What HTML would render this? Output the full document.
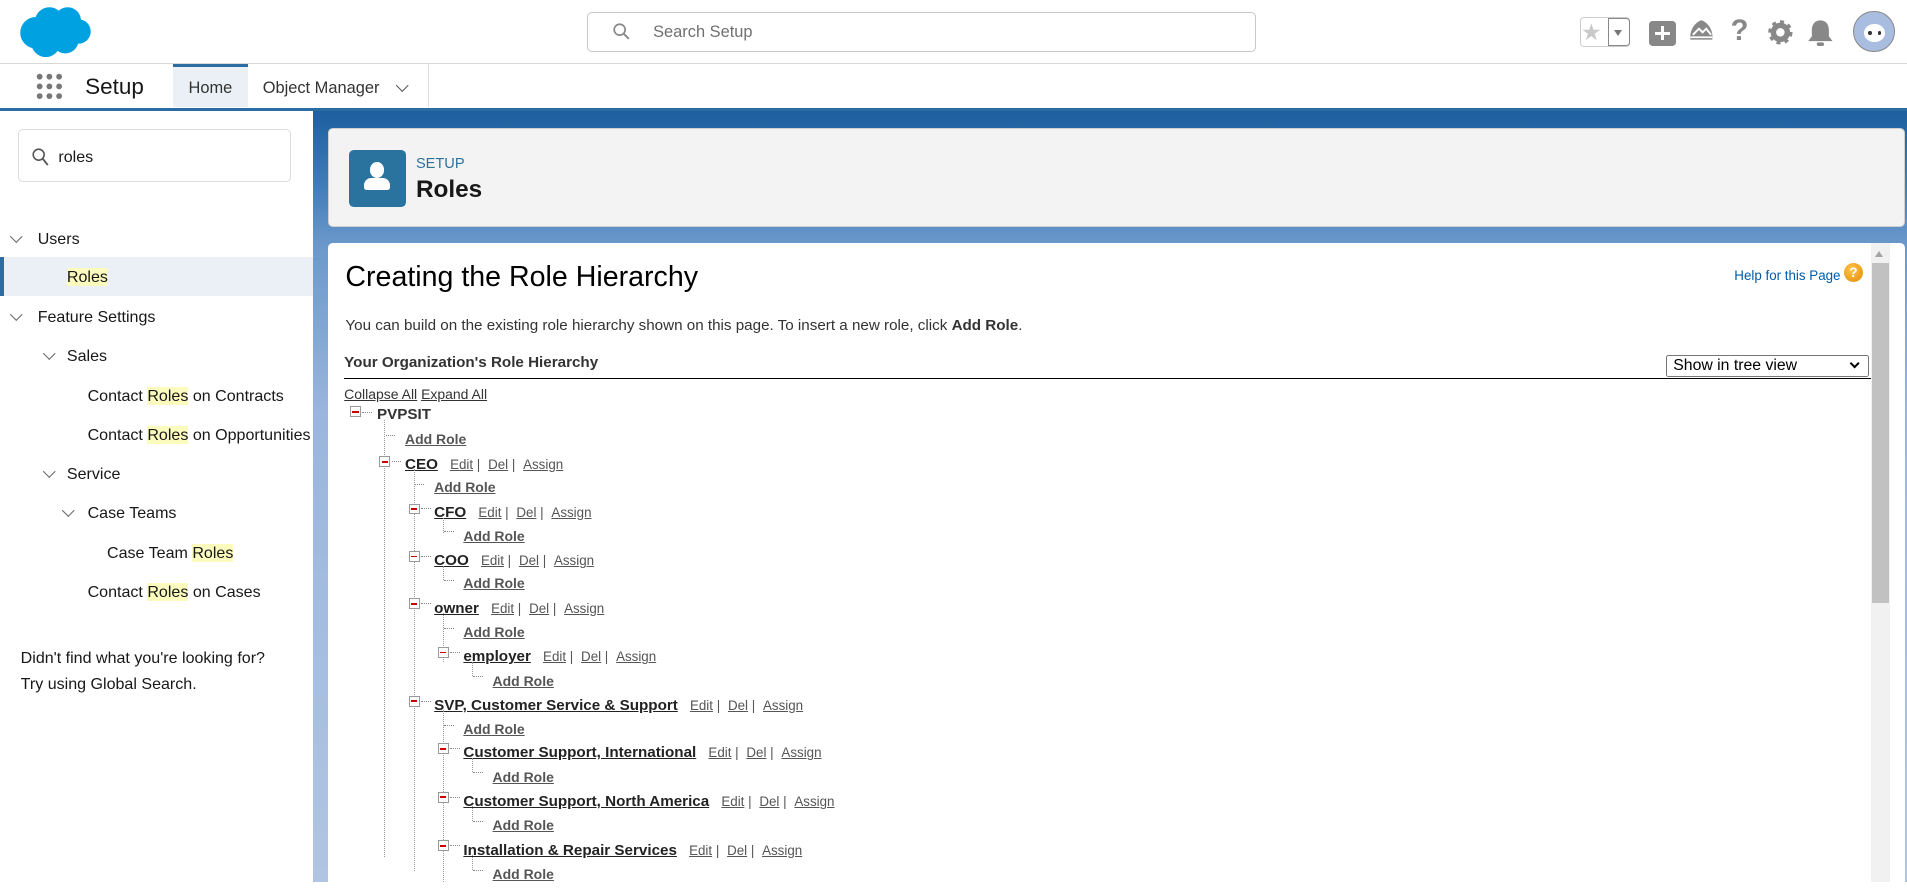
<!DOCTYPE html>
<html><head><meta charset="utf-8"><style>
html{zoom:1.21620}
*{box-sizing:border-box;margin:0;padding:0}
body{width:1568px;height:725px;overflow:hidden;font-family:"Liberation Sans",sans-serif;background:#fff;position:relative;color:#181818}
.a{position:absolute}
.hdr{left:0;top:0;width:1568px;height:53px;border-bottom:1px solid #d8d8d8;background:#fff}
.nav{left:0;top:53px;width:1568px;height:38px;background:#fff;border-bottom:3px solid #2b6ca3}
.side{left:0;top:91px;width:257px;height:634px;background:#fff}
.side .t{position:absolute;font-size:13.2px;color:#181818;white-space:nowrap}
.hl{background:#fbfbbd}
.chev{position:absolute;width:7px;height:7px;border-right:1.5px solid #666;border-bottom:1.5px solid #666;transform:rotate(45deg)}
.main{left:257px;top:91px;width:1311px;height:634px;background:linear-gradient(180deg,#1d5f9f 0px,#3f7cb8 60px,#6b98cb 110px,#9ab6dc 250px,#b0c5e3 634px)}
.card{background:#f3f3f3;border-radius:4px;border:1px solid #d0d0d0}
.tr{position:absolute;white-space:nowrap;font-size:12px}
.nm{font-weight:bold;color:#222;text-decoration:underline;font-size:12.5px}
.lk{color:#555;text-decoration:underline;font-size:11px}
.sep{color:#555;font-size:11px}
.ar{font-weight:bold;color:#555;text-decoration:underline;font-size:11.5px}
.box{position:absolute;width:9px;height:9px;border:1px solid #999;background:#fff}
.box:after{content:"";position:absolute;left:1px;top:3px;width:5px;height:1.5px;background:#c00}
.dh{position:absolute;width:8px;border-top:1px dotted #888}
.dv{position:absolute;border-left:1px dotted #999}
</style></head><body>
<div class="a hdr">
 <svg class="a" style="left:16px;top:5px" width="60" height="43" viewBox="0 0 60 43"><g fill="#00a1e0"><circle cx="14" cy="22" r="13"/><circle cx="25" cy="13" r="12"/><circle cx="40" cy="12" r="11"/><circle cx="49" cy="21" r="10"/><circle cx="38" cy="28" r="11"/><circle cx="22" cy="30" r="12"/></g></svg>
 <div class="a" style="left:483px;top:10px;width:550px;height:33px;border:1px solid #c9c9c9;border-radius:4px"></div>
 <svg class="a" style="left:504px;top:19px" width="14" height="14" viewBox="0 0 14 14"><circle cx="5.5" cy="5.5" r="4.5" fill="none" stroke="#888" stroke-width="1.4"/><path d="M9 9l4 4" stroke="#888" stroke-width="1.6"/></svg>
 <div class="a" style="left:537px;top:19px;font-size:13.5px;color:#707070">Search Setup</div>
 <div class="a" style="left:1299px;top:14px;width:41px;height:25px;border:1px solid #ccc;border-radius:3px"></div>
 <div class="a" style="left:1300px;top:14px;font-size:19px;color:#c9c9c9;line-height:25px">★</div>
 <div class="a" style="left:1322px;top:15px;width:18px;height:23px;border:1px solid #888;border-radius:0 3px 3px 0"></div>
 <div class="a" style="left:1327px;top:25px;border-left:4px solid transparent;border-right:4px solid transparent;border-top:5px solid #777"></div>
 <div class="a" style="left:1356px;top:17px;width:22px;height:21px;border-radius:3px;background:#888"></div>
 <div class="a" style="left:1361px;top:26px;width:12px;height:2.5px;background:#fff"></div>
 <div class="a" style="left:1366px;top:21px;width:2.5px;height:12px;background:#fff"></div>
 <svg class="a" style="left:1388px;top:16px" width="22" height="22" viewBox="0 0 22 22"><path d="M11 1C5 3 1 10 2 17h18C21 10 17 3 11 1z" fill="#888"/><path d="M4 13l5-5 3 3 3-3 4 5" fill="none" stroke="#fff" stroke-width="1.6"/><path d="M2 15h18" stroke="#fff" stroke-width="1.4"/></svg>
 <div class="a" style="left:1423px;top:12px;font-size:24px;font-weight:bold;color:#888">?</div>
 <svg class="a" style="left:1453px;top:16px" width="22" height="22" viewBox="0 0 22 22"><circle cx="11" cy="11" r="8" fill="#888" stroke="#888" stroke-width="4" stroke-dasharray="3 3.2"/><circle cx="11" cy="11" r="3.5" fill="#fff"/></svg>
 <svg class="a" style="left:1486px;top:15px" width="22" height="24" viewBox="0 0 22 24"><path d="M11 2c-5 0-7 4-7 8v5l-3 4h20l-3-4v-5c0-4-2-8-7-8z" fill="#888"/><rect x="8" y="20" width="6" height="3" rx="1.5" fill="#888"/></svg>
 <div class="a" style="left:1524px;top:9px;width:34px;height:34px;border-radius:50%;border:1px solid #888;background:#a9bde0;overflow:hidden"><div class="a" style="left:8px;top:10px;width:17px;height:15px;border-radius:50%;background:#fff"></div><div class="a" style="left:11px;top:16px;width:3px;height:3px;background:#333;border-radius:50%"></div><div class="a" style="left:19px;top:16px;width:3px;height:3px;background:#333;border-radius:50%"></div></div>
</div>
<div class="a nav">
 <svg class="a" style="left:30px;top:7px" width="22" height="22"><g fill="#777"><circle cx="3" cy="3" r="2.4"/><circle cx="11" cy="3" r="2.4"/><circle cx="19" cy="3" r="2.4"/><circle cx="3" cy="11" r="2.4"/><circle cx="11" cy="11" r="2.4"/><circle cx="19" cy="11" r="2.4"/><circle cx="3" cy="19" r="2.4"/><circle cx="11" cy="19" r="2.4"/><circle cx="19" cy="19" r="2.4"/></g></svg>
 <div class="a" style="left:70px;top:8px;font-size:18.5px;color:#181818">Setup</div>
 <div class="a" style="left:142px;top:0;width:62px;height:35px;background:#eaf0f5;border-top:3px solid #2b6ca3"></div>
 <div class="a" style="left:155px;top:12px;font-size:13.5px;color:#333">Home</div>
 <div class="a" style="left:216px;top:12px;font-size:13.5px;color:#333">Object Manager</div>
 <div class="chev" style="left:327px;top:14px;border-color:#555"></div>
 <div class="a" style="left:352px;top:0;width:1px;height:35px;background:#ddd"></div>
</div>
<div class="a side">
 <div class="a" style="left:15px;top:15px;width:224px;height:44px;border:1px solid #ddd;border-radius:4px"></div>
 <svg class="a" style="left:26px;top:31px" width="14" height="15" viewBox="0 0 14 15"><circle cx="5.5" cy="5.5" r="4.5" fill="none" stroke="#555" stroke-width="1.3"/><path d="M9 9l4 5" stroke="#555" stroke-width="1.5"/></svg>
 <div class="t" style="left:48px;top:31px">roles</div>
 <div class="chev" style="left:10px;top:100px"></div><div class="t" style="left:31px;top:98px">Users</div>
 <div class="a" style="left:0;top:120px;width:257px;height:32px;background:#eaf0f5;border-left:4px solid #2b6ca3"></div>
 <div class="t" style="left:55px;top:129px"><span class="hl">Roles</span></div>
 <div class="chev" style="left:10px;top:164px"></div><div class="t" style="left:31px;top:162px">Feature Settings</div>
 <div class="chev" style="left:37px;top:196px"></div><div class="t" style="left:55px;top:194px">Sales</div>
 <div class="t" style="left:72px;top:227px">Contact <span class="hl">Roles</span> on Contracts</div>
 <div class="t" style="left:72px;top:259px">Contact <span class="hl">Roles</span> on Opportunities</div>
 <div class="chev" style="left:37px;top:293px"></div><div class="t" style="left:55px;top:291px">Service</div>
 <div class="chev" style="left:53px;top:325px"></div><div class="t" style="left:72px;top:323px">Case Teams</div>
 <div class="t" style="left:88px;top:356px">Case Team <span class="hl">Roles</span></div>
 <div class="t" style="left:72px;top:388px">Contact <span class="hl">Roles</span> on Cases</div>
 <div class="t" style="left:17px;top:443px">Didn't find what you're looking for?</div>
 <div class="t" style="left:17px;top:464px">Try using Global Search.</div>
</div>
<div class="a main"></div>
<div class="a card" style="left:270px;top:105px;width:1296px;height:82px"></div>
<div class="a" style="left:287px;top:123px;width:47px;height:47px;background:#2a739e;border-radius:4px"></div>
<div class="a" style="left:304px;top:133px;width:12px;height:13px;border-radius:50%;background:#fff"></div>
<div class="a" style="left:299px;top:146px;width:22px;height:10px;border-radius:6px 6px 2px 2px;background:#fff"></div>
<div class="a" style="left:342px;top:128px;font-size:12px;color:#2a739e">SETUP</div>
<div class="a" style="left:342px;top:145px;font-size:20px;font-weight:bold;color:#181818">Roles</div>
<div class="a" style="left:270px;top:200px;width:1296px;height:530px;background:#fff;border-radius:4px 4px 0 0"></div>
<div class="a" style="left:1538px;top:200px;width:16px;height:525px;background:#f1f1f1"></div>
<div class="a" style="left:1542px;top:206px;border-left:4px solid transparent;border-right:4px solid transparent;border-bottom:5px solid #a3a3a3"></div>
<div class="a" style="left:1539px;top:216px;width:14px;height:280px;background:#c1c1c1"></div>
<div class="a" style="left:284px;top:215px;font-size:23.5px;color:#000">Creating the Role Hierarchy</div>
<div class="a" style="left:1426px;top:220px;font-size:11px;color:#015ba7">Help for this Page</div>
<div class="a" style="left:1516px;top:216px;width:16px;height:16px;border-radius:50%;background:radial-gradient(circle at 40% 35%,#ffc44d,#e08a00);color:#fff;font-size:11px;font-weight:bold;text-align:center;line-height:16px">?</div>
<div class="a" style="left:284px;top:261px;font-size:12.5px;color:#333">You can build on the existing role hierarchy shown on this page. To insert a new role, click <b>Add Role</b>.</div>
<div class="a" style="left:283px;top:291px;font-size:12.5px;font-weight:bold;color:#333">Your Organization's Role Hierarchy</div>
<div class="a" style="left:1370px;top:292px;width:167px;height:18px;border:1px solid #767676;border-radius:2px;font-size:13px;color:#000;padding-left:5px;line-height:16px">Show in tree view</div>
<div class="a chev" style="left:1522px;top:296px;width:6px;height:6px;border-color:#000;border-width:2px"></div>
<div class="a" style="left:283px;top:311px;width:1255px;height:1px;background:#000"></div>
<div class="a" style="left:283px;top:317px;font-size:11.5px;color:#333"><u>Collapse All</u> <u>Expand All</u></div>

<div class="box" style="left:288px;top:334px"></div><div class="dh" style="left:298px;top:339px"></div>
<div class="tr" style="left:310px;top:334px"><b style="color:#333;font-size:12.5px">PVPSIT</b></div>
<div class="dv" style="left:316px;top:345px;height:360px"></div>

<div class="dh" style="left:317px;top:358px"></div><div class="tr" style="left:333px;top:354px"><span class="ar">Add Role</span></div>
<div class="box" style="left:312px;top:375px"></div><div class="dh" style="left:322px;top:379px"></div>
<div class="tr" style="left:333px;top:375px"><span class="nm">CEO</span>&nbsp;&nbsp;&nbsp;<span class="lk">Edit</span><span class="sep"> | </span>&nbsp;<span class="lk">Del</span><span class="sep"> | </span>&nbsp;<span class="lk">Assign</span></div>
<div class="dv" style="left:340px;top:386px;height:330px"></div>
<div class="dh" style="left:341px;top:398px"></div><div class="tr" style="left:357px;top:394px"><span class="ar">Add Role</span></div>

<div class="box" style="left:336px;top:414px"></div><div class="dh" style="left:346px;top:418px"></div>
<div class="tr" style="left:357px;top:414px"><span class="nm">CFO</span>&nbsp;&nbsp;&nbsp;<span class="lk">Edit</span><span class="sep"> | </span>&nbsp;<span class="lk">Del</span><span class="sep"> | </span>&nbsp;<span class="lk">Assign</span></div>
<div class="dv" style="left:364px;top:426px;height:12px"></div><div class="dh" style="left:365px;top:437px"></div>
<div class="tr" style="left:381px;top:434px"><span class="ar">Add Role</span></div>

<div class="box" style="left:336px;top:453px"></div><div class="dh" style="left:346px;top:457px"></div>
<div class="tr" style="left:357px;top:454px"><span class="nm">COO</span>&nbsp;&nbsp;&nbsp;<span class="lk">Edit</span><span class="sep"> | </span>&nbsp;<span class="lk">Del</span><span class="sep"> | </span>&nbsp;<span class="lk">Assign</span></div>
<div class="dv" style="left:364px;top:465px;height:12px"></div><div class="dh" style="left:365px;top:477px"></div>
<div class="tr" style="left:381px;top:473px"><span class="ar">Add Role</span></div>

<div class="box" style="left:336px;top:492px"></div><div class="dh" style="left:346px;top:496px"></div>
<div class="tr" style="left:357px;top:493px"><span class="nm">owner</span>&nbsp;&nbsp;&nbsp;<span class="lk">Edit</span><span class="sep"> | </span>&nbsp;<span class="lk">Del</span><span class="sep"> | </span>&nbsp;<span class="lk">Assign</span></div>
<div class="dv" style="left:364px;top:504px;height:40px"></div><div class="dh" style="left:365px;top:516px"></div>
<div class="tr" style="left:381px;top:513px"><span class="ar">Add Role</span></div>
<div class="box" style="left:360px;top:532px"></div><div class="dh" style="left:370px;top:536px"></div>
<div class="tr" style="left:381px;top:533px"><span class="nm">employer</span>&nbsp;&nbsp;&nbsp;<span class="lk">Edit</span><span class="sep"> | </span>&nbsp;<span class="lk">Del</span><span class="sep"> | </span>&nbsp;<span class="lk">Assign</span></div>
<div class="dv" style="left:388px;top:544px;height:12px"></div><div class="dh" style="left:389px;top:556px"></div>
<div class="tr" style="left:405px;top:553px"><span class="ar">Add Role</span></div>

<div class="box" style="left:336px;top:572px"></div><div class="dh" style="left:346px;top:576px"></div>
<div class="tr" style="left:357px;top:573px"><span class="nm">SVP, Customer Service &amp; Support</span>&nbsp;&nbsp;&nbsp;<span class="lk">Edit</span><span class="sep"> | </span>&nbsp;<span class="lk">Del</span><span class="sep"> | </span>&nbsp;<span class="lk">Assign</span></div>
<div class="dv" style="left:364px;top:584px;height:141px"></div><div class="dh" style="left:365px;top:596px"></div>
<div class="tr" style="left:381px;top:593px"><span class="ar">Add Role</span></div>

<div class="box" style="left:360px;top:611px"></div><div class="dh" style="left:370px;top:615px"></div>
<div class="tr" style="left:381px;top:612px"><span class="nm">Customer Support, International</span>&nbsp;&nbsp;&nbsp;<span class="lk">Edit</span><span class="sep"> | </span>&nbsp;<span class="lk">Del</span><span class="sep"> | </span>&nbsp;<span class="lk">Assign</span></div>
<div class="dv" style="left:388px;top:623px;height:12px"></div><div class="dh" style="left:389px;top:635px"></div>
<div class="tr" style="left:405px;top:632px"><span class="ar">Add Role</span></div>

<div class="box" style="left:360px;top:651px"></div><div class="dh" style="left:370px;top:655px"></div>
<div class="tr" style="left:381px;top:652px"><span class="nm">Customer Support, North America</span>&nbsp;&nbsp;&nbsp;<span class="lk">Edit</span><span class="sep"> | </span>&nbsp;<span class="lk">Del</span><span class="sep"> | </span>&nbsp;<span class="lk">Assign</span></div>
<div class="dv" style="left:388px;top:663px;height:12px"></div><div class="dh" style="left:389px;top:675px"></div>
<div class="tr" style="left:405px;top:672px"><span class="ar">Add Role</span></div>

<div class="box" style="left:360px;top:691px"></div><div class="dh" style="left:370px;top:695px"></div>
<div class="tr" style="left:381px;top:692px"><span class="nm">Installation &amp; Repair Services</span>&nbsp;&nbsp;&nbsp;<span class="lk">Edit</span><span class="sep"> | </span>&nbsp;<span class="lk">Del</span><span class="sep"> | </span>&nbsp;<span class="lk">Assign</span></div>
<div class="dv" style="left:388px;top:703px;height:12px"></div><div class="dh" style="left:389px;top:715px"></div>
<div class="tr" style="left:405px;top:712px"><span class="ar">Add Role</span></div>
</body></html>
